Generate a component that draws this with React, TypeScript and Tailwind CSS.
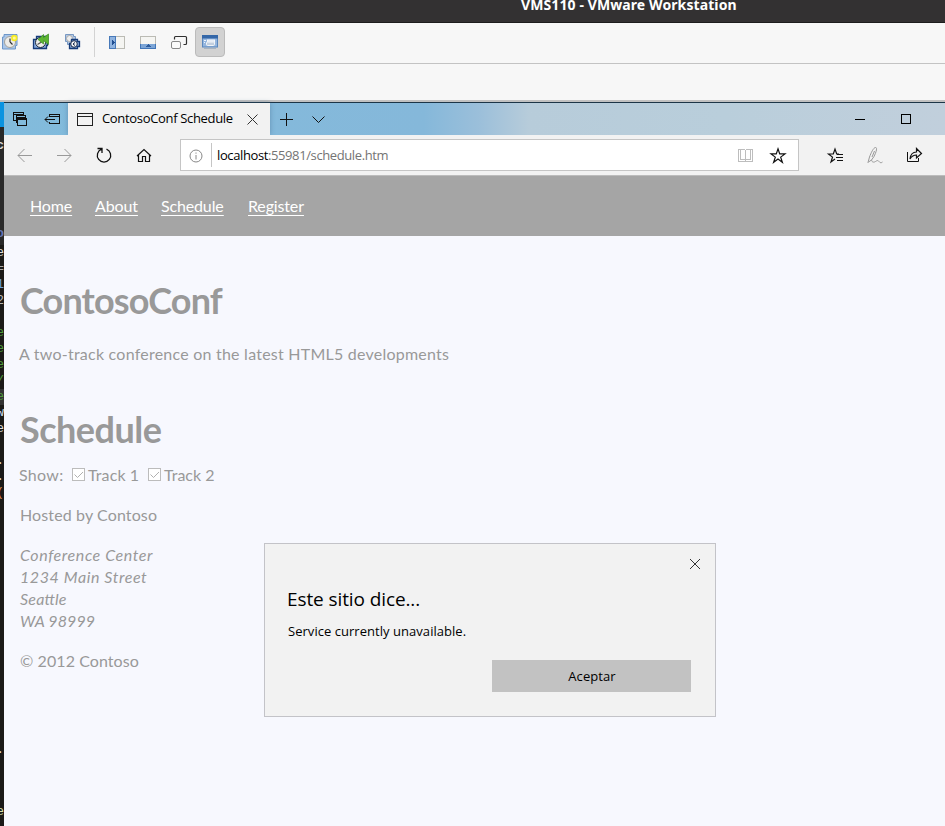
import React from "react";

const codeRows: [string, string][] = [
  ["e", "text-[#dcdcdc]"], ["=", "text-[#a8a8a8]"], ["1", "text-[#6d9fd6]"], ["2", "text-[#b5b5b5]"],
  ["", ""], ["e", "text-[#4f9a3c]"], ["e", "text-[#4f9a3c]"], ["e", "text-[#4f9a3c]"],
  ["/", "text-[#4f9a3c]"], ["e", "text-[#4f9a3c]"], ["w", "text-[#c8dcea]"], ["e", "text-[#dcdcdc]"],
  ["", ""], [".", "text-[#dcdcdc]"], [".", "text-[#dcdcdc]"], ["(", "text-[#d98a52]"],
];

function CodeStrip() {
  return (
    <div className="flex w-1 shrink-0 flex-col overflow-hidden bg-[#1b1a18] font-['Liberation_Mono',monospace] text-[13px]">
      <div className="h-[25px] shrink-0 bg-[#0a93e0]" />
      <div className="flex h-[118px] shrink-0 flex-col items-end bg-[#292929] leading-4">
        <span className="mt-[11px] h-4 font-bold text-[#dcdcdc]">c</span>
        <span className="mt-[72px] h-4 font-bold text-[#6475b5]">o</span>
      </div>
      <div className="flex flex-col items-end">
        {codeRows.map(([c, color], i) => (
          <span key={i} className={"h-4 leading-4 " + color + (i === 9 ? " bg-[#333333]" : "")}>{c}</span>
        ))}
        <span className="mt-[241px] h-4 leading-4 text-[#dcdcdc]">.</span>
        <span className="mt-[46px] h-4 leading-4 text-[#d5dfae]">e</span>
      </div>
    </div>
  );
}

function HostToolbar() {
  return (
    <div className="flex h-[41px] shrink-0 items-start border-b border-[#c3c3c3] bg-[#f7f7f7]">
      <svg width="94" height="40" viewBox="0 23 94 40">
        <path d="M4 34.5h13v11h-1.500v3.500H2.500V37H4z" fill="#a9c5e8" stroke="#6d96c8" />
        <circle cx="10" cy="42" r="5.500" fill="#ecebe8" stroke="#a5a39c" />
        <path d="M10 42l2.500 2.500M10 42V38.500" stroke="#333" strokeWidth="1.200" />
        <circle cx="14.300" cy="38" r="3.200" fill="#f5ea25" />
        <circle cx="14.300" cy="38" r="1.500" fill="#fff89a" />
        <path d="M36.500 36.500h11v9h-1v3h-13v-9h3z" fill="#86a9dc" stroke="#163b78" strokeWidth="1.300" />
        <circle cx="40.500" cy="42.500" r="5" fill="#eeeeec" stroke="#1e2a3c" />
        <path d="M41.500 42l-4 2.500" stroke="#555" strokeWidth="1.200" />
        <path d="M38 39.500l5.500-5v3l5-3.500v10.500l-5-4v3.500z" fill="#5cb531" stroke="#3a8d20" strokeWidth=".7" />
        <path d="M65.500 34.500h8v2h2v8h-8v-3h-2z" fill="#b5cae6" stroke="#7898c2" />
        <circle cx="69.500" cy="38.500" r="3" fill="#eee" stroke="#aaa" />
        <path d="M71.500 39.500h6v2h2v5h-2v2h-8v-5h2z" fill="#88aada" stroke="#163b78" strokeWidth="1.300" />
        <circle cx="74" cy="44" r="3.300" fill="#f3f3f3" stroke="#14264a" />
        <path d="M75 42.500l-2 1.500 2 1.500" fill="none" stroke="#14264a" />
      </svg>
      <div className="mt-1 h-[30px] w-px bg-[#d3d3d3]" />
      <svg width="100" height="40" viewBox="95 23 100 40">
        <g shapeRendering="crispEdges">
          <path d="M109.500 36.500h15v12h-15z" fill="#f5f5f2" stroke="#bbbbb4" />
          <path d="M109 36h7v13h-7z" fill="#4779b9" /><path d="M110 37h5v11h-5z" fill="#8fb3df" />
          <path d="M112 40v5l3-2.500z" fill="#1f4e91" />
          <path d="M140.500 36.500h15v12h-15z" fill="#f5f5f2" stroke="#bbbbb4" />
          <path d="M140 44h16v5h-16z" fill="#4175b7" /><path d="M141 44h14v4h-14z" fill="#7ca5d6" />
          <path d="M145 47h6l-3-3z" fill="#2d5b9b" />
        </g>
        <path d="M174.500 39.500v-2q0-1 1-1h10q1 0 1 1v6q0 1-1 1h-2" fill="none" stroke="#303030" strokeWidth="1.200" />
        <rect x="171.500" y="41.500" width="9" height="7" rx="1.500" fill="#fafafa" stroke="#888" />
      </svg>
      <div className="mt-1 flex h-[30px] w-[30px] items-center justify-center rounded-[4px] border border-[#bbbbbb] bg-[#d2d2d2]">
        <svg width="16" height="14" viewBox="0 0 16 14">
          <rect x=".5" y=".5" width="15" height="11.500" fill="#95b6de" stroke="#5b88be" />
          <path d="M0 0h16v3.500H0z" fill="#3467a8" />
          <path d="M2 5.500h2M2 7.500h1" stroke="#eef5ff" />
          <rect x="5.500" y="5" width="7" height="3.500" fill="#dbe5f1" stroke="#f5f8fc" />
          <rect x="4.500" y="7" width="8" height="3.500" rx="1" fill="#c2cfdf" stroke="#f2f5f8" />
          <path d="M2 13.500h12" stroke="#a8b3c0" />
        </svg>
      </div>
    </div>
  );
}

function TabBar() {
  return (
    <div className="flex h-8 shrink-0 bg-[linear-gradient(90deg,#82bbdc_0px,#85b8da_420px,#9bbfda_475px,#b7ccda_525px,#b9cedb_720px,#c1cfdc_941px)] font-['Open_Sans',sans-serif]">
      <svg className="shrink-0" width="64" height="32" viewBox="4 103 64 32" fill="none" stroke="#101010" shapeRendering="crispEdges">
        <path d="M15.500 120.500h-2v-8h10v2M13 114.500h11" />
        <path d="M17.500 122.500h-1.500v-7h9v2M16 117.500h9" />
        <path d="M17.500 118.500h9v7h-9zM17 119.500h10" />
        <path d="M49.500 116v-1.500h10v9h-10v-2M49 116.500h11M45 119.500h10" />
        <path d="M48 116.500l-3 3 3 3" shapeRendering="auto" />
      </svg>
      <div className="flex w-[202px] shrink-0 items-center bg-[#f2f2f2] pl-[9px] shadow-[0_0_5px_#33557766]">
        <svg width="16" height="13" fill="none" stroke="#222" shapeRendering="crispEdges"><path d="M.5.5h15v12H.5zM0 3.500h16" /></svg>
        <span className="mb-[2px] ml-[9px] w-[132px] whitespace-nowrap text-[13px] leading-4 tracking-[-0.33px] text-black">ContosoConf Schedule</span>
        <svg className="ml-[13px]" width="11" height="11" stroke="#333" strokeWidth="1"><path d="M.5.5l10 10M10.500.5l-10 10" /></svg>
      </div>
      <svg className="shrink-0" width="575" height="32" viewBox="270 103 575 32" fill="none" stroke="#111">
        <path d="M280 119.500h13M286.500 113v13" shapeRendering="crispEdges" />
        <path d="M312.500 116.500l6 6 6-6" />
      </svg>
      <svg className="shrink-0" width="100" height="32" viewBox="845 103 100 32" fill="none" stroke="#000" shapeRendering="crispEdges">
        <path d="M855 119.500h10M901.500 114.500h9v9h-9z" />
      </svg>
    </div>
  );
}

function AddressBar() {
  return (
    <div className="flex h-[41px] shrink-0 items-start border-b border-[#bcbcbc] bg-[#f2f2f2]">
      <svg width="176" height="40" viewBox="4 135 176 40" fill="none" stroke="#111">
        <g stroke="#999"><path d="M18 155.500h14M24.500 149l-6.500 6.500 6.500 6.500M57 155.500h14M64.500 149l6.500 6.500-6.500 6.500" /></g>
        <path d="M106.500 149.200a6.700 6.700 0 1 1-5 0M97.500 148.500h4.500v4.500" strokeWidth="1.300" />
        <path d="M137 156l7-6.500 7 6.500M138.500 155v6.500h4v-5h3v5h4v-6.500" strokeWidth="1.200" />
      </svg>
      <div className="mt-1 flex h-8 w-[619px] items-center border border-[#c5c5c5] bg-white">
        <svg className="ml-2 mt-px" width="14" height="14" fill="none" stroke="#888"><circle cx="7" cy="7" r="6" /><path d="M7 6v4.500M7 3.500v1.200" /></svg>
        <div className="ml-2 h-6 w-px bg-[#c5c5c5]" />
        <span className="ml-[5px] mt-[2px] whitespace-nowrap font-['Open_Sans',sans-serif] text-[13px] tracking-[-0.39px] text-[#747474]"><span className="text-black">localhost</span>:55981/schedule.htm</span>
        <svg className="ml-auto mr-[7px]" width="56" height="30" viewBox="735 140 56 30" fill="none">
          <path d="M740 149.500h-1.500v12h14v-12H751M740.500 149.500h4l1 1 1-1h4v10h-4l-1 1-1-1h-4zM745.500 150v11" stroke="#bdbdbd" shapeRendering="crispEdges" />
          <path d="M778 148.800l1.700 5.100h5.300l-4.300 3.200 1.700 5.200-4.400-3.200-4.400 3.200 1.700-5.200-4.300-3.200h5.300z" stroke="#111" strokeWidth="1.200" />
        </svg>
      </div>
      <svg width="146" height="40" viewBox="799 135 146 40" fill="none" stroke="#111">
        <path d="M839 154h-2.300L835 149l-1.700 5H828.500l4 3.100-1.500 4.900 4-3" strokeWidth="1.200" />
        <path d="M837 154.500h6M836 157.500h7M837 160.500h6" shapeRendering="crispEdges" />
        <path d="M868 162.500l1.500-5.500c1.500-4 4-9.500 6-9.500 2.500 0 0 6-1.500 9l-2.500 3.500-3 2zM872 157l2.500-6M871.500 160c.5 2.500 2.500 2.500 4 1.500s2.500-1.500 3.500 0 2.500 1.500 3.500.5" stroke="#999" />
        <path d="M907.500 152v9.500h11v-3.500" />
        <path d="M910 159c.5-4.500 2.500-7 6.500-7v-3.500l5 5-5 4.500v-3c-3 0-5 1.500-6.500 4z" strokeWidth="1.200" />
      </svg>
    </div>
  );
}

function Check() {
  return <svg className="shrink-0" width="13" height="13" fill="none"><rect x=".5" y=".5" width="12" height="12" fill="#fff" stroke="#bcbcbc" /><path d="M2.500 6.500l3 3L11 4" stroke="#b0b0b0" /></svg>;
}

function Dialog() {
  return (
    <div className="absolute left-[260px] top-[307px] flex h-[174px] w-[452px] flex-col border border-[#c3c3c8] bg-[#f2f2f2] pl-[23px] font-['Open_Sans',sans-serif] text-black">
      <svg className="ml-auto mr-[14px] mt-[14px] shrink-0" width="12" height="12" stroke="#333"><path d="M1 1l10 10M11 1L1 11" /></svg>
      <h2 className="-ml-px mt-4 whitespace-nowrap text-[19px] leading-[26px] tracking-[-0.1px]">Este sitio dice...</h2>
      <p className="mt-[9px] whitespace-nowrap text-[13px] leading-5 tracking-[0.04px]">Service currently unavailable.</p>
      <button className="ml-[204px] mt-[19px] h-8 w-[199px] bg-[#c2c2c2] pl-px text-[13px] tracking-[0.08px]">Aceptar</button>
    </div>
  );
}

export default function App() {
  return (
    <div className="flex h-[826px] w-[945px] flex-col overflow-hidden bg-[#f7f7f7]">
      <div className="h-[23px] shrink-0 border-b border-[#1d1d1d] bg-[#333132] pl-[521px]">
        <div className="-mt-[5px] whitespace-nowrap font-['Noto_Sans',sans-serif] text-[14px] font-bold leading-5 tracking-[0.1px] text-white">VMS110 - VMware Workstation</div>
      </div>
      <HostToolbar />
      <div className="h-9 shrink-0" />
      <div className="h-[2px] shrink-0 bg-[#c1c1c1]" />
      <div className="flex h-[724px] shrink-0">
        <CodeStrip />
        <div className="flex w-[941px] flex-col border-t border-[#1c3547]">
          <TabBar />
          <AddressBar />
          <nav className="flex h-[60px] shrink-0 items-center bg-[#a5a5a5] pl-[26px] font-['Lato',sans-serif] text-[16px] tracking-[-0.15px] text-white underline underline-offset-[3px]">
            <a className="w-[65px]">Home</a><a className="w-[66px]">About</a><a className="w-[87px]">Schedule</a><a>Register</a>
          </nav>
          <main className="relative h-[590px] bg-[#f7f8fe] pl-4 font-['Lato',sans-serif] text-[16px] leading-[22px] text-[#999999]">
            <h1 className="pt-[40px] text-[36px] font-bold leading-[48px] tracking-[-0.87px]">ContosoConf</h1>
            <p className="-ml-px mt-[19px] tracking-[0.23px]">A two-track conference on the latest HTML5 developments</p>
            <h1 className="mt-[40px] text-[36px] font-bold leading-[48px] tracking-[-0.5px]">Schedule</h1>
            <div className="mt-[11px] flex h-[22px] items-center">
              <span className="-ml-px w-[53px] tracking-[0.3px]">Show:</span><span className="mb-[2px]"><Check /></span><span className="ml-[3px] w-[60px] tracking-[0.1px]">Track 1</span><span className="mb-[2px]"><Check /></span><span className="ml-[3px]">Track 2</span>
            </div>
            <p className="mt-[18px] tracking-[0.12px]">Hosted by Contoso</p>
            <address className="mt-[18px] italic tracking-[0.58px]">Conference Center<br />1234 Main Street<br /><span className="tracking-[0.2px]">Sea<span className="tracking-[0px]">tt</span>le</span><br /><span className="tracking-[0.1px]">WA 98999</span></address>
            <p className="mt-[18px] tracking-[0.08px]">© 2012 Contoso</p>
            <Dialog />
          </main>
        </div>
      </div>
    </div>
  );
}
